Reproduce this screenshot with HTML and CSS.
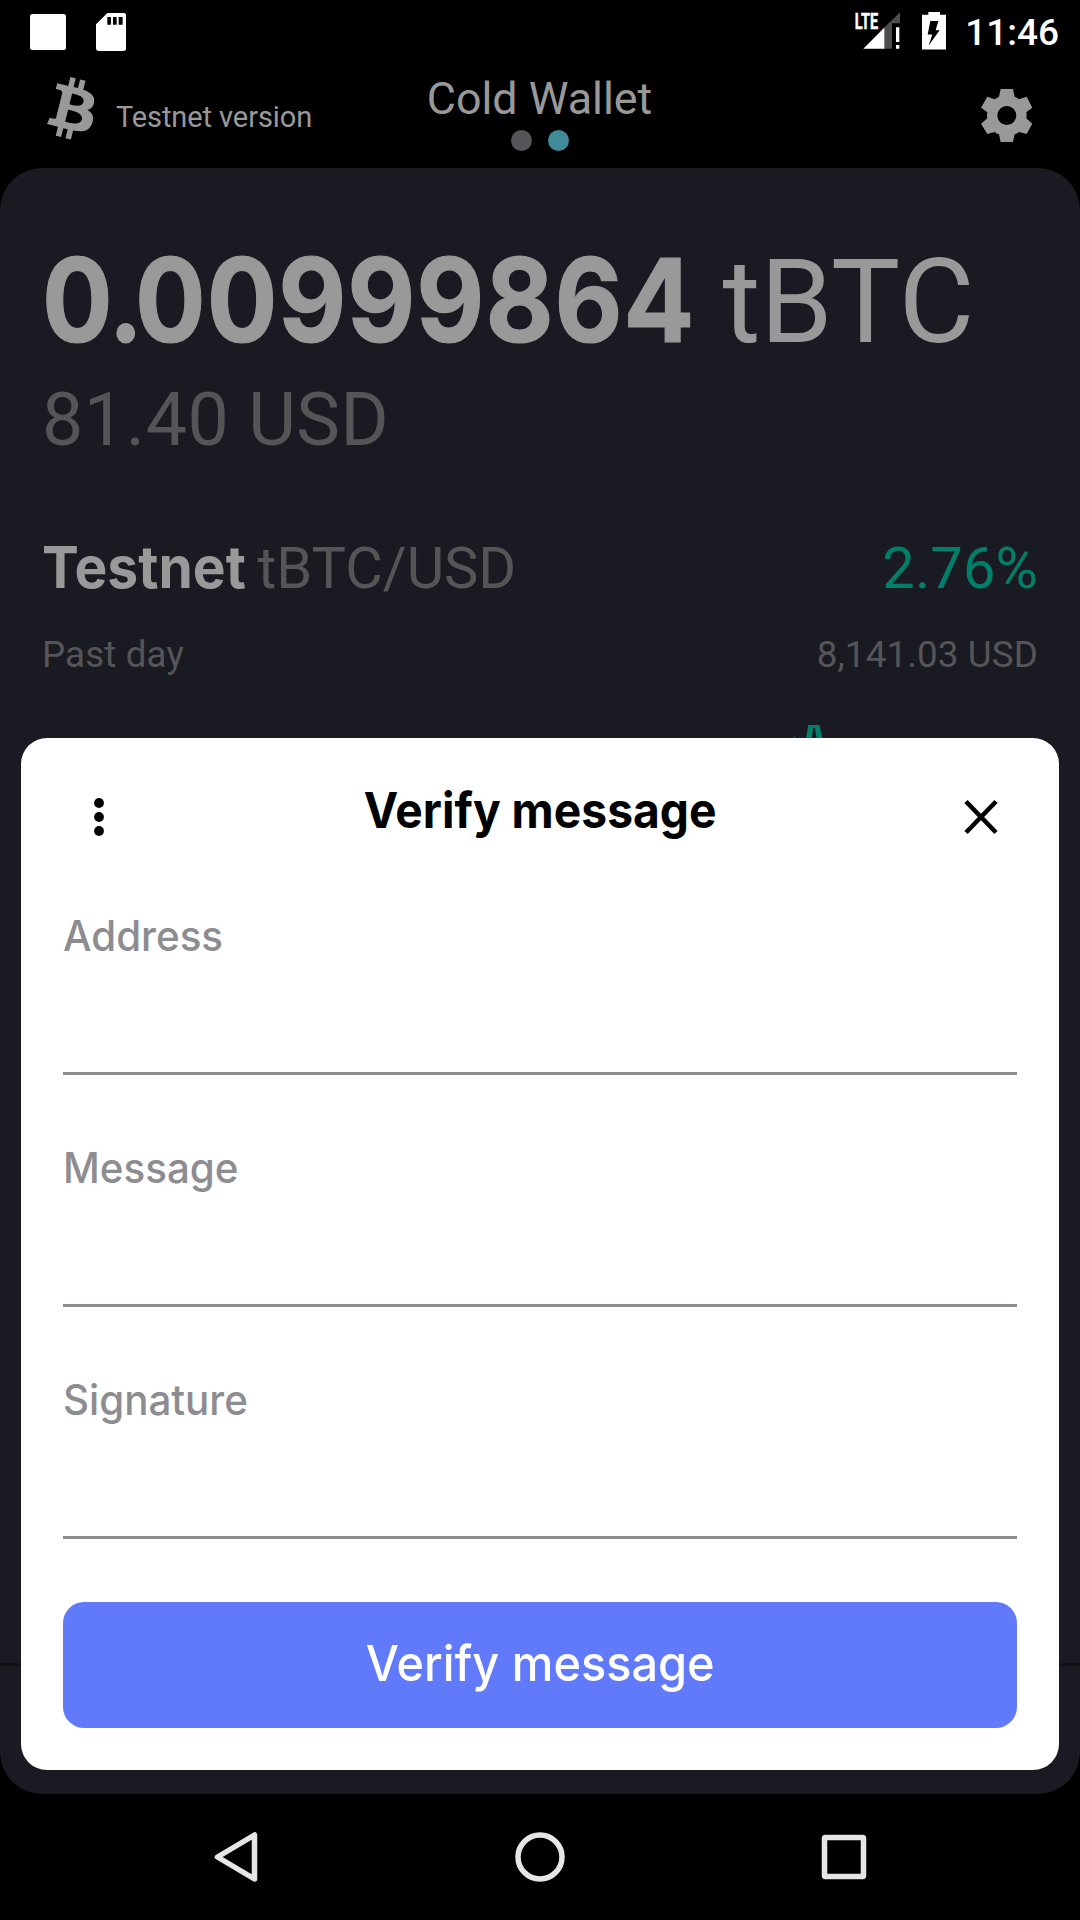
FILE: index.html
```html
<!DOCTYPE html>
<html lang="en">
<head>
<meta charset="utf-8">
<title>Cold Wallet</title>
<link rel="stylesheet" href="styles.css">
</head>
<body>
<div class="screen">
  <div class="status-bar">
    <div class="status-left">
      <svg class="icon-app" viewBox="0 0 36 36"><rect width="36" height="36" rx="2.5" fill="#fff"/></svg>
      <svg class="icon-sd" viewBox="0 0 91 114"><path fill="#fff" fill-rule="evenodd" d="M34 0H82Q91 0 91 9V105Q91 114 82 114H9Q0 114 0 105V34ZM34 12V35H45V12ZM51 12V35H62V12ZM68 12V35H80V12Z"/></svg>
    </div>
    <div class="status-right">
      <svg class="icon-signal" viewBox="0 0 135 114">
        <text class="lte" transform="translate(-1 50) scale(.67 1)">LTE</text>
        <path fill="#fff" d="M25 110H89V46ZM123 46H133V90H123ZM123 99H133V110H123Z"/>
        <path fill="#4d4d4d" d="M89 46L135 1V34H111V110H89Z"/>
      </svg>
      <svg class="icon-battery" viewBox="0 0 72 113"><path fill="#fff" fill-rule="evenodd" d="M19 0H54V8H72V113H0V8H19ZM25 27L17 68H31L20 101L53 55H41L49 27Z"/></svg>
      <span class="clock">11:46</span>
    </div>
  </div>

  <header class="app-bar">
    <div class="brand">
      <svg class="icon-btc" viewBox="8.15 6 15.1 19.9"><path fill="#999" d="M23.189 14.02c.314-2.096-1.283-3.223-3.465-3.975l.708-2.84-1.728-.43-.69 2.765c-.454-.114-.92-.22-1.385-.326l.695-2.783L15.596 6l-.708 2.839c-.376-.086-.746-.17-1.104-.26l.002-.009-2.384-.595-.46 1.846s1.283.294 1.256.312c.7.175.826.638.805 1.006l-.806 3.235c.048.012.11.03.18.057l-.183-.045-1.13 4.532c-.086.212-.303.531-.793.41.018.025-1.256-.313-1.256-.313l-.858 1.978 2.25.561c.418.105.828.215 1.231.318l-.715 2.872 1.727.43.708-2.84c.472.127.93.245 1.378.357l-.706 2.828 1.728.43.715-2.866c2.948.558 5.164.333 6.097-2.333.752-2.146-.037-3.385-1.588-4.192 1.13-.26 1.98-1.003 2.207-2.538zm-3.95 5.538c-.533 2.147-4.148.986-5.32.695l.95-3.805c1.172.293 4.929.872 4.37 3.11zm.535-5.569c-.487 1.953-3.495.96-4.47.717l.86-3.45c.975.243 4.118.696 3.61 2.733z"/></svg>
      <span class="network">Testnet version</span>
    </div>
    <div class="heading">
      <h1 class="heading-title">Cold Wallet</h1>
      <div class="pager"><i class="dot"></i><i class="dot dot-active"></i></div>
    </div>
    <div class="actions">
      <svg class="icon-gear" viewBox="482 267 154 159"><path fill="#999" fill-rule="evenodd" d="M541 267H578L583 290Q590 293 596 298L619 290L636 323L618 337Q620 346 618 355L636 371L619 402L596 396Q590 401 583 403L578 426H541L536 403Q529 401 523 396L501 402L482 371L501 355Q499 346 501 337L482 323L501 290L523 298Q529 293 536 290ZM588 346.500A28.500 28.500 0 1 0 531 346.500A28.500 28.500 0 1 0 588 346.500Z"/></svg>
    </div>
  </header>

  <main class="wallet">
    <div class="balance"><b class="amount">0<span class="point">.</span>00999864</b> tBTC</div>
    <div class="fiat">81.40 USD</div>
    <div class="market">
      <div><b class="coin">Testnet</b><span class="pair">tBTC/USD</span></div>
      <span class="change">2.76%</span>
    </div>
    <div class="period"><span>Past day</span><span>8,141.03 USD</span></div>
    <svg class="chart" viewBox="0 0 996 160"><path d="M751 14L752.500 11L754 14ZM766.300 0H777.300L784.500 30H777L773 3H771L768 30H761Z" fill="#00806a"/></svg>
    <div class="divider"></div>
  </main>

  <nav class="nav-bar">
    <svg class="nav-icon" viewBox="0 0 50 50"><path d="M6.500 25L43.500 3V47Z"/></svg>
    <svg class="nav-icon" viewBox="0 0 50 50"><circle cx="25" cy="25" r="22"/></svg>
    <svg class="nav-icon" viewBox="0 0 50 50"><rect x="5.500" y="5.500" width="39" height="39" rx="1"/></svg>
  </nav>

  <section class="dialog">
    <div class="dialog-head">
      <svg class="icon-more" viewBox="0 0 10 38"><circle cx="5" cy="5" r="4.900"/><circle cx="5" cy="19" r="4.900"/><circle cx="5" cy="33" r="4.900"/></svg>
      <h2 class="dialog-title">Verify message</h2>
      <svg class="icon-close" viewBox="0 0 32 32"><path d="M1 .5L31 31.500M31 .5L1 31.500" stroke="#000" stroke-width="4.600"/></svg>
    </div>
    <div class="fields">
      <div class="field"><span class="label">Address</span></div>
      <div class="field"><span class="label">Message</span></div>
      <div class="field"><span class="label">Signature</span></div>
    </div>
    <button class="submit"><span class="submit-text">Verify message</span></button>
  </section>
</div>
</body>
</html>
```
FILE: styles.css
```css
* { box-sizing: border-box; }
body { margin: 0; background: #000; }
svg { display: block; flex: none; }
h1, h2 { margin: 0; font-weight: 400; }

.screen {
  position: relative;
  display: flex;
  flex-direction: column;
  width: 1080px;
  height: 1920px;
  overflow: hidden;
  background: #000;
  color: #999;
  font-family: Roboto, "Noto Sans", sans-serif;
}

/* System status bar */
.status-bar {
  display: flex;
  justify-content: space-between;
  height: 63px;
  padding: 12px 21px 0 29.500px;
}
.status-left, .status-right { display: flex; align-items: flex-start; }
.status-left { gap: 30px; }
.icon-app { width: 36px; height: 36px; margin-top: 1.500px; }
.icon-sd { width: 30.300px; height: 38px; margin-top: .7px; }
.icon-signal { width: 45px; height: 38px; margin-right: 22px; overflow: visible; }
.icon-battery { width: 24px; height: 37.600px; margin: .3px 19.500px 0 0; }
.lte { font: 700 65px Roboto, sans-serif; fill: #fff; stroke: #fff; stroke-width: 1.500; }
.clock { color: #fff; font-size: 37px; font-weight: 500; line-height: 42px; }

/* App header */
.app-bar {
  display: grid;
  grid-template-columns: 1fr auto 1fr;
  align-items: start;
  height: 105px;
  padding: 0 48px 0 47px;
}
.brand { display: flex; }
.icon-btc { width: 47.400px; height: 62.400px; margin-top: 14.300px; }
.network { margin: 38px 0 0 21.500px; font-size: 29px; letter-spacing: -.08px; line-height: 32px; }
.heading { display: flex; flex-direction: column; align-items: center; }
.heading-title { margin-top: 10px; font-size: 44.800px; line-height: 52px; }
.pager { display: flex; gap: 16px; margin: 4.500px 0 0 1px; }
.dot { width: 21px; height: 21px; border-radius: 50%; background: #565658; }
.dot-active { background: #408a99; }
.actions { display: flex; justify-content: flex-end; }
.icon-gear { width: 51.300px; height: 53px; margin-top: 26px; }

/* Wallet summary */
.wallet {
  height: 1626px;
  padding: 69px 42px 0;
  border-radius: 42px;
  background: #1a1a22;
  color: #555557;
}
.balance { color: #999; font-size: 116px; line-height: 130px; white-space: nowrap; }
.amount {
  display: inline-block;
  margin-right: -72px;
  font-family: Inter, sans-serif;
  font-weight: 700;
  letter-spacing: 1.100px;
  line-height: 0;
  transform: scaleX(.903);
  transform-origin: left;
  -webkit-text-stroke: 1.200px #999;
}
.point { margin-left: -6px; letter-spacing: -9px; }
.fiat { margin-top: 10px; font-size: 73.500px; letter-spacing: .55px; line-height: 86px; }
.market {
  display: flex;
  justify-content: space-between;
  margin-top: 70px;
  font-size: 57.750px;
  line-height: 70px;
}
.coin {
  display: inline-block;
  margin-right: 2px;
  color: #999;
  font-family: Inter, sans-serif;
  line-height: 0;
  transform: scaleX(.955);
  transform-origin: left;
}
.change { color: #00806a; letter-spacing: .15px; }
.period {
  display: flex;
  justify-content: space-between;
  margin-top: 30px;
  font-size: 36.750px;
  letter-spacing: .13px;
  line-height: 44px;
}
.chart { width: 996px; height: 160px; margin-top: 48px; }
.divider { height: 3px; margin: 778px -42px 0; background: #101015; }

/* System navigation */
.nav-bar { display: flex; justify-content: center; gap: 254px; padding-top: 38px; }
.nav-icon { width: 50px; height: 50px; fill: none; stroke: #e6e6e6; stroke-width: 5.500; stroke-linejoin: round; }

/* Dialog over the wallet */
.dialog {
  position: absolute;
  top: 738px;
  left: 21px;
  width: 1038px;
  height: 1032px;
  padding: 42px;
  border-radius: 26px;
  background: #fff;
  font-family: Inter, sans-serif;
}
.dialog-head {
  display: grid;
  grid-template-columns: 1fr auto 1fr;
  height: 60px;
  padding: 0 20px 0 31px;
}
.icon-more { width: 10px; height: 38px; margin-top: 18px; }
.icon-close { width: 32px; height: 32px; margin-top: 21px; justify-self: end; overflow: visible; }
.dialog-title {
  margin-left: -10px;
  color: #000;
  font-size: 49.500px;
  font-weight: 700;
  line-height: 60px;
  transform: scaleX(.933);
}
.fields { display: flex; flex-direction: column; gap: 68px; margin-top: 71px; }
.field {
  height: 164px;
  border-bottom: 3px solid #8d8c91;
  color: #8d8c91;
  font-size: 42px;
  font-weight: 500;
  line-height: 50px;
}
.label { display: inline-block; transform: scaleX(.96); transform-origin: left; }
.submit {
  display: block;
  width: 100%;
  height: 126px;
  margin-top: 63px;
  padding: 0 0 4px;
  border: 0;
  border-radius: 21px;
  background: #617afa;
  color: #fff;
  font: 500 49.500px Inter, sans-serif;
}
.submit-text { display: inline-block; transform: scaleX(.947); }
```
